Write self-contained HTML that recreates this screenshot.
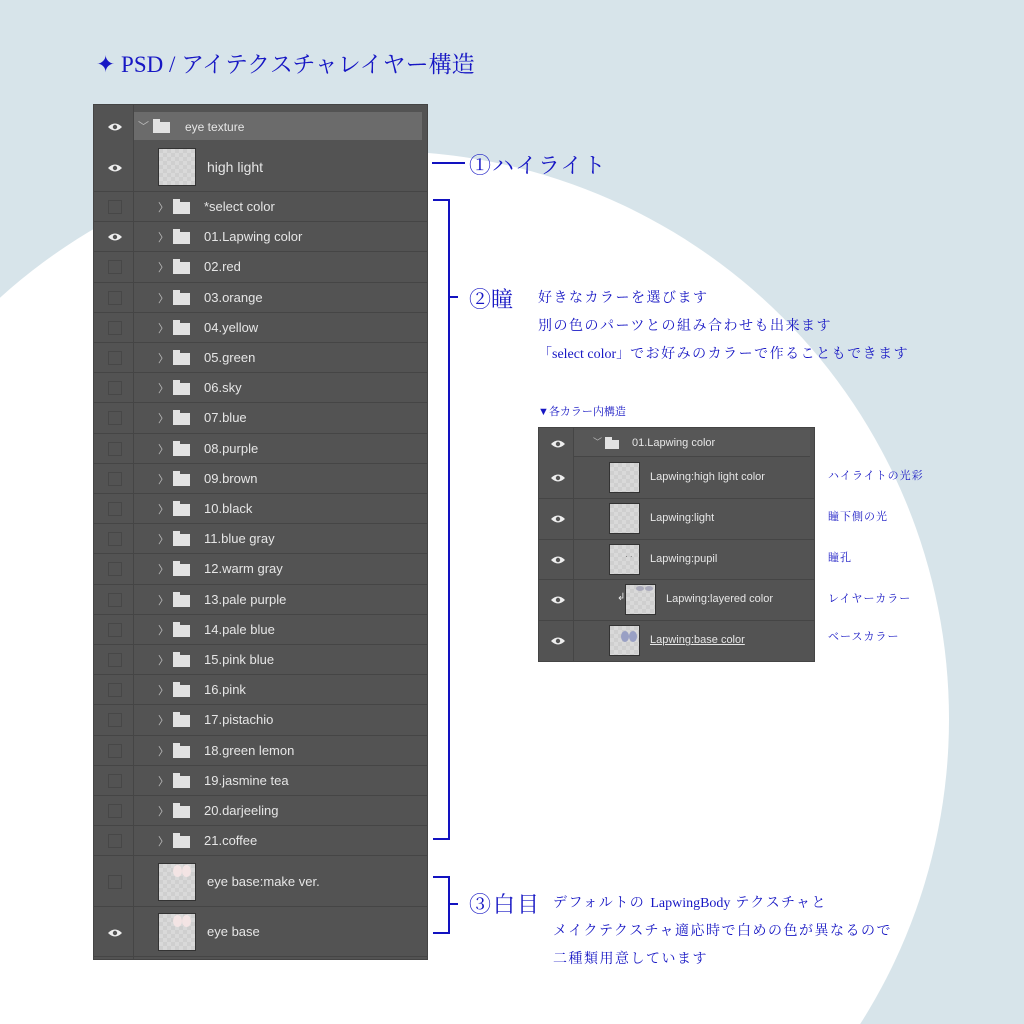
<!DOCTYPE html>
<html style="width:1024px;height:1024px;overflow:hidden"><head><meta charset="utf-8"><style>
*{margin:0;padding:0;box-sizing:border-box}
body{width:1024px;height:1024px;overflow:hidden;background:#d7e4ea;position:relative;font-family:"Liberation Sans",Arial,sans-serif}
.wrap{position:absolute;left:0;top:0;width:1024px;height:1024px;overflow:hidden}
.circ{position:absolute;left:-187px;top:151px;width:1136px;height:1136px;border-radius:50%;background:#fff}
.blue{color:#1717c4;font-family:"Liberation Serif","Noto Serif CJK SC",serif;position:absolute;white-space:nowrap}
.panel{position:absolute;background:#535353;border:1px solid #444}
.row{position:absolute;left:0;right:0;border-bottom:1px solid #454545}
.sep{position:absolute;top:0;bottom:0;border-left:1px solid #454545}
.cb{position:absolute;width:14px;height:14px;border:1px solid #474747}
.eye{position:absolute}
.chev{position:absolute;color:#bbb;font-size:11px}
.fold{position:absolute;width:17px;height:12px;background:#e2e2e2}
.fold:before{content:"";position:absolute;left:0;top:-3px;width:7px;height:3px;background:#e2e2e2}
.t{position:absolute;color:#e6e6e6;font-size:13px;white-space:nowrap}
.th{position:absolute;background:#d6d6d6;border:1px solid #333;background-image:repeating-conic-gradient(#d9d9d9 0 25%,#cfcfcf 0 50%);background-size:8px 8px}
.ln{position:absolute;background:#1212c0}
</style></head><body>
<div class="wrap"><div class="circ"></div></div>
<div class="blue" style="left:96px;top:46px;font-size:23px">✦ PSD / アイテクスチャレイヤー構造</div>

<div class="panel" style="left:93px;top:104px;width:335px;height:856px">
<div class="sep" style="left:39px"></div>
<div class="row" style="top:0;height:37px;border:none"></div>
<div style="position:absolute;left:40px;top:7px;width:288px;height:28px;background:#6b6b6b"></div>
<svg class="eye" style="left:13px;top:17px" width="16" height="10" viewBox="0 0 16 10"><path d="M1 5Q8 -2 15 5Q8 12 1 5Z" fill="#eee"/><circle cx="8" cy="5" r="2.2" fill="#555"/></svg>
<div class="chev" style="left:44px;top:13px">﹀</div>
<div class="fold" style="left:59px;top:17px;height:11px"></div>
<div class="t" style="left:91px;top:15px;font-size:12px">eye texture</div>
<div class="row" style="top:37px;height:50px"></div>
<svg class="eye" style="left:13px;top:58px" width="16" height="10" viewBox="0 0 16 10"><path d="M1 5Q8 -2 15 5Q8 12 1 5Z" fill="#eee"/><circle cx="8" cy="5" r="2.2" fill="#555"/></svg>
<div class="th" style="left:64px;top:43px;width:38px;height:38px"></div>
<div class="t" style="left:113px;top:54px;font-size:14px">high light</div>
</div>

<div class="panel" style="left:538px;top:427px;width:277px;height:235px">
<div class="sep" style="left:34px"></div>
</div>

<script>
var names=["*select color","01.Lapwing color","02.red","03.orange","04.yellow","05.green","06.sky","07.blue","08.purple","09.brown","10.black","11.blue gray","12.warm gray","13.pale purple","14.pale blue","15.pink blue","16.pink","17.pistachio","18.green lemon","19.jasmine tea","20.darjeeling","21.coffee"];
var eye='<svg class="eye" style="left:13px;top:POSpx" width="16" height="10" viewBox="0 0 16 10"><path d="M1 5Q8 -2 15 5Q8 12 1 5Z" fill="#eee"/><circle cx="8" cy="5" r="2.2" fill="#555"/></svg>';
var h='';var P=document.querySelectorAll('.panel')[0];
for(var i=0;i<22;i++){var y=87+i*30.2;
h+='<div class="row" style="top:'+y+'px;height:30.2px"></div>';
if(i==1)h+=eye.replace('POS',y+10);else h+='<div class="cb" style="left:14px;top:'+(y+8)+'px"></div>';
h+='<div class="chev" style="left:64px;top:'+(y+7)+'px">〉</div><div class="fold" style="left:79px;top:'+(y+10)+'px"></div><div class="t" style="left:110px;top:'+(y+7)+'px">'+names[i]+'</div>';}
var b=[["eye base:make ver.",752,0],["eye base",802,1]];
b.forEach(function(r){var y=r[1];h+='<div class="row" style="top:'+y+'px;height:50px"></div>';
if(r[2])h+=eye.replace('POS',y+21);else h+='<div class="cb" style="left:14px;top:'+(y+18)+'px"></div>';
h+='<div class="th" style="left:64px;top:'+(y+6)+'px;width:38px;height:38px"><div style="position:absolute;left:14px;top:1px;width:9px;height:12px;border-radius:50%;background:#f3e4e4"></div><div style="position:absolute;left:23px;top:1px;width:9px;height:12px;border-radius:50%;background:#f3e4e4"></div></div><div class="t" style="left:113px;top:'+(y+17)+'px">'+r[0]+'</div>';});
P.insertAdjacentHTML('beforeend',h);
var Q=document.querySelectorAll('.panel')[1];h='';
h+='<div style="position:absolute;left:35px;top:2px;width:236px;height:27px;background:#575757;border-bottom:1px solid #454545"></div>'+eye.replace('POS',11).replace('left:13px','left:11px')+'<div class="chev" style="left:54px;top:7px;font-size:9px">﹀</div><div class="fold" style="left:66px;top:12px;width:14px;height:9px"></div><div class="t" style="left:93px;top:9px;font-size:11px">01.Lapwing color</div>';
var s=[["Lapwing:high light color",0],["Lapwing:light",0],["Lapwing:pupil",1],["Lapwing:layered color",2],["Lapwing:base color",3]];
for(var k=0;k<5;k++){var y=30+k*40.8,ind=k==3?16:0;
h+='<div class="row" style="top:'+y+'px;height:40.8px"></div>'+eye.replace('POS',y+15).replace('left:13px','left:11px');
var inner='';if(k==2)inner='<div style="position:absolute;left:15px;top:7px;color:#555;font-size:8px">·&nbsp;·</div>';
if(k==3)inner='<div style="position:absolute;left:10px;top:1px;width:8px;height:5px;border-radius:50%;background:#aab"></div><div style="position:absolute;left:19px;top:1px;width:8px;height:5px;border-radius:50%;background:#aab"></div>';
if(k==4)inner='<div style="position:absolute;left:11px;top:5px;width:8px;height:11px;border-radius:50%;background:#99a0c4"></div><div style="position:absolute;left:19px;top:5px;width:8px;height:11px;border-radius:50%;background:#99a0c4"></div>';
if(k==3)h+='<div class="t" style="left:78px;top:'+(y+12)+'px;font-size:10px">↲</div>';
h+='<div class="th" style="left:'+(70+ind)+'px;top:'+(y+4)+'px;width:31px;height:31px">'+inner+'</div><div class="t" style="left:'+(111+ind)+'px;top:'+(y+13)+'px;font-size:11px;'+(k==4?'text-decoration:underline':'')+'">'+s[k][0]+'</div>';}
Q.insertAdjacentHTML('beforeend',h);
</script>

<div class="ln" style="left:432px;top:162px;width:33px;height:2px"></div>
<div class="blue" style="left:469px;top:149px;font-size:22px;letter-spacing:1px">①ハイライト</div>
<div class="ln" style="left:433px;top:199px;width:17px;height:2px"></div>
<div class="ln" style="left:448px;top:199px;width:2px;height:641px"></div>
<div class="ln" style="left:433px;top:838px;width:17px;height:2px"></div>
<div class="ln" style="left:448px;top:296px;width:10px;height:2px"></div>
<div class="blue" style="left:469px;top:283px;font-size:22px">②瞳</div>
<div class="blue" style="left:538px;top:285px;font-size:14px;letter-spacing:1.5px;line-height:28px">好きなカラーを選びます<br>別の色のパーツとの組み合わせも出来ます<br><span style="letter-spacing:0">「select color」</span>でお好みのカラーで作ることもできます</div>
<div class="blue" style="left:538px;top:403px;font-size:11px">▼各カラー内構造</div>
<div class="blue" style="left:828px;top:467px;font-size:11px;letter-spacing:1px">ハイライトの光彩</div>
<div class="blue" style="left:828px;top:508px;font-size:11px;letter-spacing:1px">瞳下側の光</div>
<div class="blue" style="left:828px;top:549px;font-size:11px;letter-spacing:1px">瞳孔</div>
<div class="blue" style="left:828px;top:590px;font-size:11px;letter-spacing:1px">レイヤーカラー</div>
<div class="blue" style="left:828px;top:628px;font-size:11px;letter-spacing:1px">ベースカラー</div>
<div class="ln" style="left:433px;top:876px;width:17px;height:2px"></div>
<div class="ln" style="left:448px;top:876px;width:2px;height:58px"></div>
<div class="ln" style="left:433px;top:932px;width:17px;height:2px"></div>
<div class="ln" style="left:448px;top:903px;width:10px;height:2px"></div>
<div class="blue" style="left:469px;top:888px;font-size:22px;letter-spacing:2px">③白目</div>
<div class="blue" style="left:553px;top:890px;font-size:14px;letter-spacing:1.5px;line-height:28px">デフォルトの <span style="letter-spacing:0">LapwingBody</span> テクスチャと<br>メイクテクスチャ適応時で白めの色が異なるので<br>二種類用意しています</div>
</body></html>
